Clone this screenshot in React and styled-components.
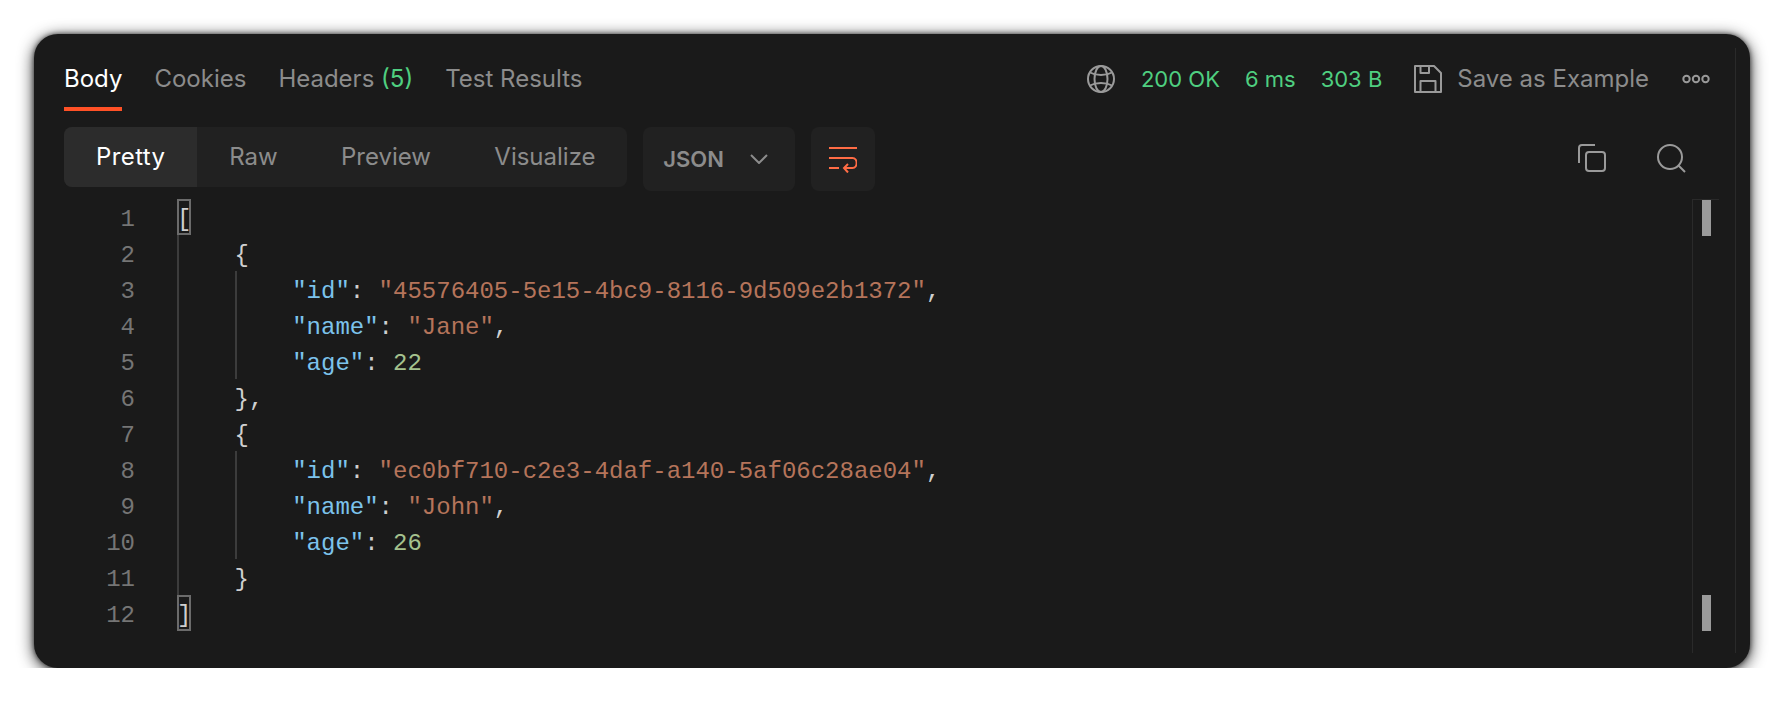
import React from 'react'
import styled, { createGlobalStyle } from 'styled-components'

const GlobalStyle = createGlobalStyle`
  html, body {
    margin: 0;
    background: #ffffff;
  }
  * {
    box-sizing: border-box;
  }
`

const Window = styled.div`
  width: 1716px;
  height: 634px;
  margin: 34px 0 0 34px;
  padding: 14px 14px 15px 30px;
  background: #1a1a1a;
  border-radius: 24px;
  box-shadow: 0 3px 16px rgba(0, 0, 0, 0.85), 0 0 5px rgba(0, 0, 0, 0.6);
  font-family: Inter, sans-serif;
  font-size: 24px;
  color: #8c8c8c;
`

const Pane = styled.div`
  height: 100%;
  display: flex;
  flex-direction: column;
  border-right: 1px solid #2a2a2a;
`

const TabBar = styled.div`
  height: 63px;
  display: flex;
  justify-content: space-between;
  flex-shrink: 0;
`

const Tabs = styled.div`
  display: flex;
  gap: 32px;
`

const Tab = styled.div`
  height: 63px;
  line-height: 62px;
  border-bottom: 4px solid ${p => (p.$active ? '#ff5126' : 'transparent')};
  color: ${p => (p.$active ? '#ffffff' : '#8c8c8c')};
`

const Count = styled.span`
  color: #4fcf80;
`

const Meta = styled.div`
  display: flex;
  align-items: flex-start;
  padding: 14px 25px 0 0;
`

const Stat = styled.span`
  margin-right: 25px;
  line-height: 34px;
  font-size: 22px;
  color: #4fcf80;
`

const SaveLabel = styled.span`
  margin: 0 33px 0 15px;
  line-height: 34px;
`

const GlyphBox = styled.span`
  display: flex;
  align-items: center;
  height: 34px;
  margin-left: ${p => p.$before || 0}px;
  margin-right: ${p => p.$after || 0}px;
`

const Toolbar = styled.div`
  height: 64px;
  margin-top: 16px;
  display: flex;
  gap: 16px;
  flex-shrink: 0;
`

const ModeGroup = styled.div`
  height: 60px;
  display: flex;
  background: #212121;
  border-radius: 8px;
  overflow: hidden;
`

const Mode = styled.div`
  padding: 0 ${p => (p.$active ? '32px' : '31.7px')};
  line-height: 60px;
  letter-spacing: ${p => (p.$active ? '0.4px' : '0')};
  background: ${p => (p.$active ? '#2c2c2c' : 'transparent')};
  color: ${p => (p.$active ? '#ffffff' : '#8c8c8c')};
`

const FormatSelect = styled.div`
  width: 152px;
  padding: 0 27px 0 20px;
  display: flex;
  align-items: center;
  justify-content: space-between;
  background: #212121;
  border-radius: 8px;
  font-size: 22px;
  font-weight: 600;
`

const WrapButton = styled.div`
  width: 64px;
  display: flex;
  align-items: center;
  justify-content: center;
  background: #212121;
  border-radius: 8px;
`

const ToolIcons = styled.div`
  margin-left: auto;
  padding: 17px 49px 0 0;
  display: flex;
  align-items: flex-start;
  gap: 51px;
`

const Editor = styled.div`
  flex: 1;
  margin-top: 8px;
  display: flex;
  min-height: 0;
`

const Gutter = styled.div`
  width: 71px;
  margin-right: 42px;
  flex-shrink: 0;
  text-align: right;
  color: #757575;
  font-family: 'Liberation Mono', monospace;
`

const LineNo = styled.div`
  height: 36px;
  line-height: 42px;
`

const Code = styled.div`
  flex: 1;
  color: #cfcfcf;
  font-family: 'Liberation Mono', monospace;
`

const Line = styled.div`
  height: 36px;
  line-height: 42px;
  display: flex;
  white-space: pre;
`

const Indent = styled.span`
  width: 57.6px;
  flex-shrink: 0;
  border-left: 2px solid #3c3c3c;
`

const MatchedBracket = styled.span`
  width: 14.4px;
  height: 36px;
  line-height: 38px;
  border: 2px solid #6b6b6b;
  display: flex;
  justify-content: center;
`

const Key = styled.span`
  color: #7cc3ec;
`

const Str = styled.span`
  color: #b5745a;
`

const Num = styled.span`
  color: #a5c28e;
`

const Ruler = styled.div`
  width: 27px;
  margin-right: 16px;
  padding: 0 0 22px 9px;
  flex-shrink: 0;
  display: flex;
  flex-direction: column;
  justify-content: space-between;
  border-left: 1px solid #2a2a2a;
  border-top: 1px solid #2a2a2a;
`

const Thumb = styled.div`
  width: 9px;
  height: 36px;
  background: #9a9a9a;
`

const Icon = ({ size = 28, color = '#9a9a9a', children }) => (
  <svg width={size} height={size} viewBox={`0 0 ${size} ${size}`} fill="none" stroke={color} strokeWidth="2" strokeLinejoin="round">
    {children}
  </svg>
)

const GlobeIcon = () => (
  <Icon>
    <circle cx="14" cy="14" r="13" />
    <ellipse cx="14" cy="14" rx="6.5" ry="13" />
    <path d="M3 7.5c6 3.4 16 3.4 22 0M3 20.5c6-3.4 16-3.4 22 0" />
  </Icon>
)

const SaveIcon = () => (
  <Icon>
    <path d="M1 1h19l7 7v19H1z" />
    <path d="M6.5 1v7H15V1M6.5 27V16h15v11" />
  </Icon>
)

const CopyIcon = () => (
  <Icon>
    <path d="M17 1H4a3 3 0 0 0-3 3v15" />
    <rect x="8" y="8" width="19" height="19" rx="3" />
  </Icon>
)

const SearchIcon = () => (
  <Icon size={29}>
    <circle cx="13" cy="13" r="12" />
    <path d="M21.5 21.5 28 28" />
  </Icon>
)

const MoreIcon = () => (
  <svg width="28" height="10" viewBox="0 0 28 10" fill="none" stroke="#9a9a9a" strokeWidth="2">
    <circle cx="4.5" cy="5" r="3.2" />
    <circle cx="14" cy="5" r="3.2" />
    <circle cx="23.5" cy="5" r="3.2" />
  </svg>
)

const ChevronIcon = () => (
  <svg width="18" height="10" viewBox="0 0 18 10" fill="none" stroke="#8c8c8c" strokeWidth="2">
    <path d="M1 1l8 8 8-8" />
  </svg>
)

const WrapIcon = () => (
  <svg width="28" height="28" viewBox="0 0 28 28" fill="none" stroke="#ff6c45" strokeWidth="2">
    <path d="M0 3h28M0 13h23.5c5.5 0 5.5 10 0 10H15M0 23h10" />
    <path d="M19 19l-4 4 4 4.5" />
  </svg>
)

const modes = ['Raw', 'Preview', 'Visualize']

const people = [
  { id: '45576405-5e15-4bc9-8116-9d509e2b1372', name: 'Jane', age: 22, close: '},' },
  { id: 'ec0bf710-c2e3-4daf-a140-5af06c28ae04', name: 'John', age: 26, close: '}' },
]

const Row = ({ depth, children }) => (
  <Line>
    {Array.from({ length: depth }, (_, i) => <Indent key={i} />)}
    <span>{children}</span>
  </Line>
)

const App = () => {
  return (
    <>
      <GlobalStyle />
      <Window>
        <Pane>
          <TabBar>
            <Tabs>
              <Tab $active>Body</Tab>
              <Tab>Cookies</Tab>
              <Tab>Headers <Count>(5)</Count></Tab>
              <Tab>Test Results</Tab>
            </Tabs>
            <Meta>
              <GlyphBox $after={26}><GlobeIcon /></GlyphBox>
              <Stat>200 OK</Stat>
              <Stat>6 ms</Stat>
              <Stat>303 B</Stat>
              <GlyphBox $before={7}><SaveIcon /></GlyphBox>
              <SaveLabel>Save as Example</SaveLabel>
              <GlyphBox><MoreIcon /></GlyphBox>
            </Meta>
          </TabBar>

          <Toolbar>
            <ModeGroup>
              <Mode $active>Pretty</Mode>
              {modes.map(m => <Mode key={m}>{m}</Mode>)}
            </ModeGroup>
            <FormatSelect>JSON <ChevronIcon /></FormatSelect>
            <WrapButton><WrapIcon /></WrapButton>
            <ToolIcons>
              <CopyIcon />
              <SearchIcon />
            </ToolIcons>
          </Toolbar>

          <Editor>
            <Gutter>
              {Array.from({ length: 12 }, (_, i) => <LineNo key={i}>{i + 1}</LineNo>)}
            </Gutter>
            <Code>
              <Line><MatchedBracket>[</MatchedBracket></Line>
              {people.map(p => (
                <React.Fragment key={p.id}>
                  <Row depth={1}>{'{'}</Row>
                  <Row depth={2}><Key>"id"</Key>: <Str>"{p.id}"</Str>,</Row>
                  <Row depth={2}><Key>"name"</Key>: <Str>"{p.name}"</Str>,</Row>
                  <Row depth={2}><Key>"age"</Key>: <Num>{p.age}</Num></Row>
                  <Row depth={1}>{p.close}</Row>
                </React.Fragment>
              ))}
              <Line><MatchedBracket>]</MatchedBracket></Line>
            </Code>
            <Ruler>
              <Thumb />
              <Thumb />
            </Ruler>
          </Editor>
        </Pane>
      </Window>
    </>
  )
}

export default App
